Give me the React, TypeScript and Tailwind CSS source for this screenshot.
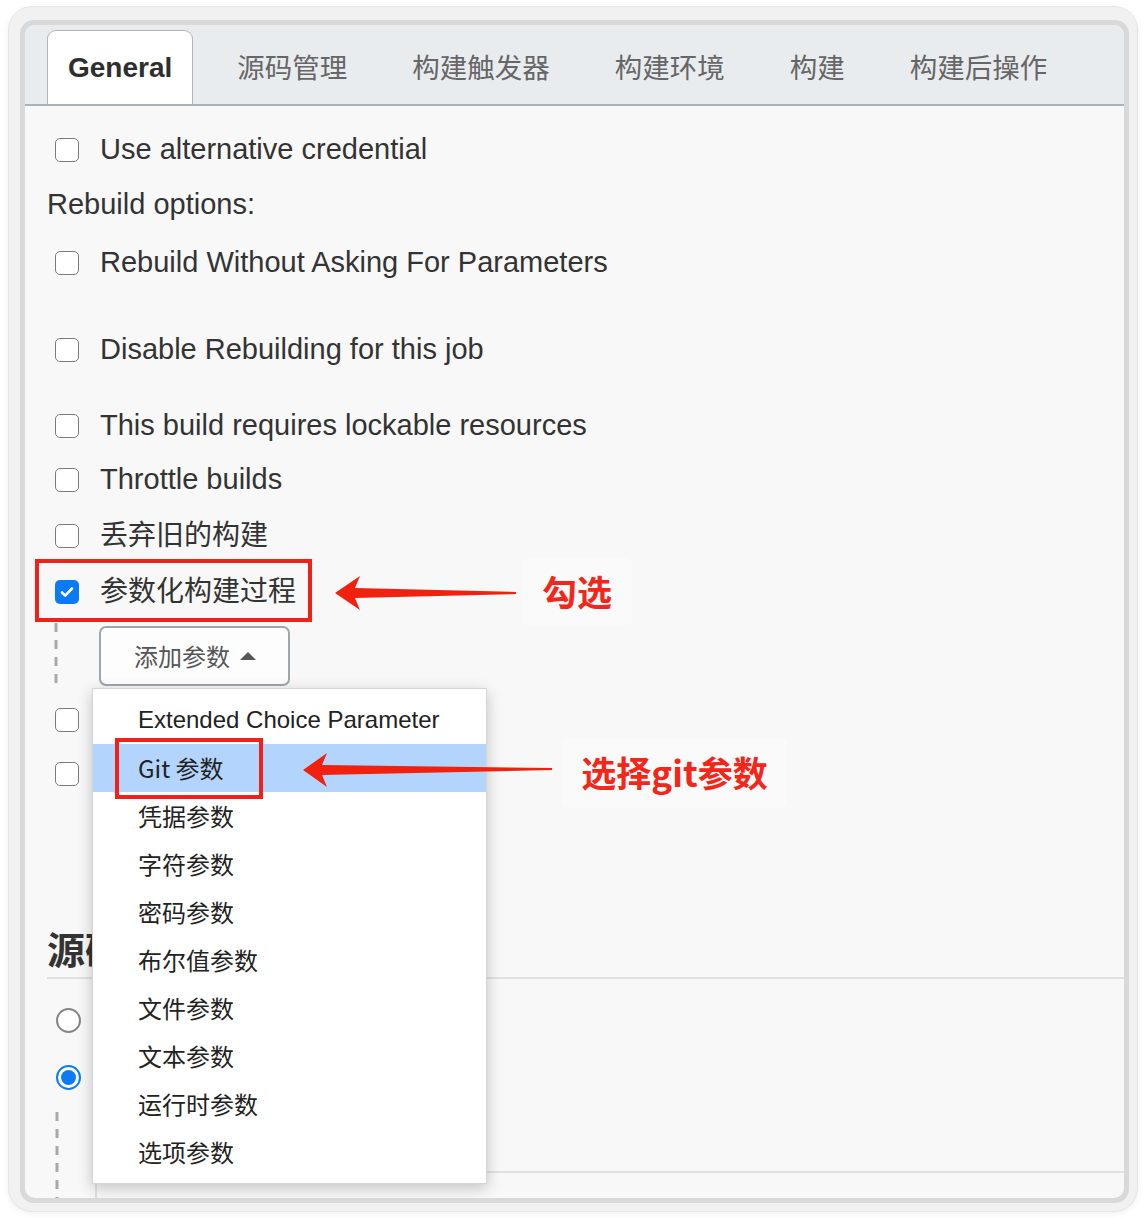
import React from "react";

const FONT = { fontFamily: '"Liberation Sans", Arial, "Noto Sans CJK SC", sans-serif' };
const CJK = { fontFamily: '"Noto Sans CJK SC", "Liberation Sans", sans-serif' };

const tabs = ["源码管理", "构建触发器", "构建环境", "构建", "构建后操作"];
const menuItems = [
  "Extended Choice Parameter",
  "Git 参数",
  "凭据参数",
  "字符参数",
  "密码参数",
  "布尔值参数",
  "文件参数",
  "文本参数",
  "运行时参数",
  "选项参数",
];

const Checkbox = ({ checked }: { checked?: boolean }) =>
  checked ? (
    <span className="flex h-[24px] w-[24px] shrink-0 items-center justify-center rounded-[5px] bg-[#0b7af5]">
      <svg width="16" height="16" viewBox="0 0 16 16">
        <path d="M3 8.5l3.2 3.2L13 4.5" stroke="white" strokeWidth="2.6" fill="none" strokeLinecap="round" strokeLinejoin="round" />
      </svg>
    </span>
  ) : (
    <span className="h-[24px] w-[24px] shrink-0 rounded-[5px] border-[1.5px] border-[#7b7b7b] bg-white" />
  );

const Radio = ({ checked }: { checked?: boolean }) =>
  checked ? (
    <span className="flex h-[25px] w-[25px] items-center justify-center rounded-full border-2 border-[#0b7af5] bg-white">
      <span className="h-[15px] w-[15px] rounded-full bg-[#0b7af5]" />
    </span>
  ) : (
    <span className="h-[25px] w-[25px] rounded-full border-2 border-[#858585] bg-white" />
  );

const Row = ({ label, checked, cjk, className = "" }: { label: string; checked?: boolean; cjk?: boolean; className?: string }) => (
  <div className={`flex h-[40px] items-center gap-[21px] pl-[30px] pt-[2px] ${className}`}>
    <Checkbox checked={checked} />
    <span className={`whitespace-nowrap text-[#333] ${cjk ? "text-[28px]" : "text-[29px]"}`}>{label}</span>
  </div>
);

const Dashed = ({ h, className = "" }: { h: number; className?: string }) => (
  <svg width="4" height={h} className={`absolute ${className}`}>
    <line x1="2" y1="0" x2="2" y2={h} stroke="#a9a9a9" strokeWidth="3" strokeDasharray="9 8" />
  </svg>
);

export default function App() {
  return (
    <div className="h-[1218px] w-[1144px] overflow-hidden bg-white pl-[8px] pt-[6px]" style={FONT}>
      {/* window frame */}
      <div className="h-[1206px] w-[1130px] rounded-[24px] border border-[#e6e6e6] bg-[#f1f1f1] pl-[11px] pt-[13px] shadow-[0_2px_6px_rgba(0,0,0,0.06)]">
        <div className="h-[1183px] w-[1109px] rounded-[14px] bg-[#d9d9d9] pl-[5px] pt-[5px]">
          <div className="relative h-[1173px] w-[1099px] overflow-hidden rounded-[10px] bg-[#f8f8f8]">
            {/* tab bar */}
            <div className="flex h-[81px] items-end gap-[23px] border-b-2 border-[#a8b3bb] bg-[#e9ecef] pl-[22px]">
              <div className="flex h-[74px] items-center rounded-t-[9px] border-[1.5px] border-b-0 border-[#adb6bd] bg-white px-[20px]">
                <span className="text-[28px] font-bold text-[#2e2e2e]">General</span>
              </div>
              {tabs.map((t) => (
                <div key={t} className="flex h-[74px] items-center px-[21px]">
                  <span className="text-[27.5px] text-[#666]" style={CJK}>
                    {t}
                  </span>
                </div>
              ))}
            </div>

            <Row label="Use alternative credential" className="mt-[23px]" />
            <div className="mt-[15px] flex h-[40px] items-center pl-[22px] pt-[2px] text-[29px] text-[#333]">Rebuild options:</div>
            <Row label="Rebuild Without Asking For Parameters" className="mt-[18px]" />
            <Row label="Disable Rebuilding for this job" className="mt-[47px]" />
            <Row label="This build requires lockable resources" className="mt-[36px]" />
            <Row label="Throttle builds" className="mt-[14px]" />
            <Row label="丢弃旧的构建" cjk className="mt-[16px]" />
            <div className="relative mt-[16px]">
              <Row label="参数化构建过程" cjk checked />
              <div className="absolute left-[10px] top-[-12px] h-[63px] w-[277px] border-4 border-[#f0211a]" />
            </div>

            {/* parameters block */}
            <div className="relative pt-[15px]">
              <Dashed h={64} className="left-[29px] top-[12px]" />
              <div className="pl-[74px]">
                <div className="flex h-[60px] w-[191px] items-center gap-[9px] rounded-[7px] border-2 border-[#9ca6ad] bg-[#fdfdfd] pl-[33px]">
                  <span className="text-[24px] text-[#555]" style={CJK}>
                    添加参数
                  </span>
                  <svg width="18" height="10" viewBox="0 0 18 10">
                    <path d="M1 9L9 1l8 8z" fill="#555" />
                  </svg>
                </div>
              </div>
              <Row label="" className="mt-[13px]" />
              <Row label="" className="mt-[14px]" />
            </div>

            {/* source code heading */}
            <div className="ml-[22px] mt-[134px] border-b-2 border-[#e1e1e1] pb-[10px]">
              <div className="flex h-[40px] items-center text-[38px] font-bold text-[#333]" style={CJK}>
                源码管理
              </div>
            </div>
            <div className="mt-[21px] flex h-[40px] items-center pl-[31px]">
              <Radio />
            </div>
            <div className="mt-[17px] flex h-[40px] items-center pl-[31px]">
              <Radio checked />
            </div>
            <div className="relative mt-[15px] h-[90px] pt-[59px]">
              <Dashed h={90} className="left-[30px] top-0" />
              <div className="ml-[70px] h-[40px] border-l-2 border-t-2 border-[#e1e1e1]" />
            </div>

            {/* dropdown menu */}
            <div className="absolute left-[67px] top-[663px] w-[395px] border border-[#d4d4d4] bg-white py-[7px] shadow-[0_4px_14px_rgba(0,0,0,0.22)]">
              {menuItems.map((m, i) => (
                <div
                  key={m}
                  className={`flex h-[48px] items-center pl-[45px] text-[24px] text-[#222] ${i === 1 ? "bg-[#b3d5fd]" : ""}`}
                  style={i === 0 ? FONT : CJK}
                >
                  {m}
                </div>
              ))}
              <div className="absolute left-[22px] top-[49px] h-[61px] w-[148px] border-4 border-[#f0211a]" />
            </div>

            {/* annotations */}
            <svg className="absolute left-[310px] top-[548px]" width="182" height="40" viewBox="0 0 182 40">
              <path d="M0 20 L25 3 L20 15 L181 19 L181 21 L20 25 L25 37 Z" fill="#f2200f" />
            </svg>
            <div className="absolute left-[497px] top-[533px] flex h-[67px] w-[110px] items-center justify-center rounded-[6px] bg-[#fafafa]">
              <span className="text-[35px] font-bold text-[#f3261a]" style={CJK}>
                勾选
              </span>
            </div>

            <svg className="absolute left-[278px] top-[725px]" width="250" height="40" viewBox="0 0 250 40">
              <path d="M0 20 L24 3 L19 15 L249 18 L249 20 L19 25 L24 37 Z" fill="#f2200f" />
            </svg>
            <div className="absolute left-[537px] top-[712px] flex h-[71px] w-[225px] items-center justify-center rounded-[6px] bg-[#fafafa]">
              <span className="text-[35px] font-bold text-[#f3261a]" style={CJK}>
                选择git参数
              </span>
            </div>
          </div>
        </div>
      </div>
    </div>
  );
}
